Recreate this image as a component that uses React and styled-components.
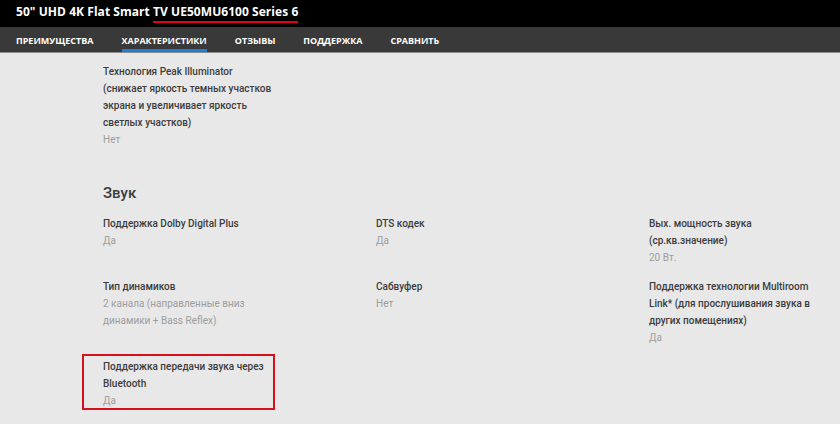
import React from "react";
import styled, { createGlobalStyle, css } from "styled-components";

const GlobalStyle = createGlobalStyle`
  html, body { margin: 0; padding: 0; background: #e8e8e8; }
  body { font-family: Roboto, "Open Sans", sans-serif; }
`;

const Page = styled.div`
  width: 840px;
  height: 424px;
  overflow: hidden;
  background: #e8e8e8;
`;

const TopBar = styled.header`
  height: 27px;
  background: #000;
  display: flex;
  align-items: center;
  padding-left: 16px;
`;

const ProductTitle = styled.h1`
  margin: 0;
  color: #fff;
  font-family: "Open Sans", sans-serif;
  font-weight: 700;
  font-size: 12px;
  letter-spacing: 0.05px;
  line-height: 14px;
  margin-top: 1px;
`;

const Marked = styled.span`
  display: inline-block;
  border-bottom: 2px solid #e3001b;
  padding-bottom: 2px;
  line-height: 14px;
`;

const NavBar = styled.nav`
  height: 25px;
  background: #393939;
  border-bottom: 1px solid #8c8c8c;
  display: flex;
  align-items: stretch;
  padding-left: 16px;
  gap: 28px;
`;

const NavItem = styled.a`
  position: relative;
  display: flex;
  align-items: center;
  color: #fff;
  font-family: "Open Sans", sans-serif;
  font-weight: 700;
  font-size: 9px;
  text-transform: uppercase;
  text-decoration: none;
  padding-top: 1px;
  ${(p) =>
    p.$active &&
    css`
      &::after {
        content: "";
        position: absolute;
        left: 0;
        right: 0;
        bottom: 0;
        height: 3px;
        background: #1f7fd6;
      }
    `}
`;

const Content = styled.main`
  padding: 10px 0 0 103px;
`;

const Spec = styled.div`
  position: relative;
  width: ${(p) => (p.$wide ? "175px" : "165px")};
  font-size: 10px;
  line-height: 17px;
  ${(p) =>
    p.$highlight &&
    css`
      &::after {
        content: "";
        position: absolute;
        left: -21px;
        top: -4px;
        width: 189px;
        height: 52px;
        border: 2px solid #d5101d;
      }
    `}
`;

const SpecName = styled.div`
  color: #3c3c3c;
  font-weight: 500;
`;

const SpecValue = styled.div`
  color: #9d9d9d;
  font-weight: 400;
`;

const SectionTitle = styled.h2`
  margin: 34px 0 0;
  font-size: 15px;
  font-weight: 500;
  line-height: 22px;
  color: #3a3a3a;
`;

const SpecGrid = styled.div`
  margin-top: 11px;
  display: grid;
  grid-template-columns: repeat(3, 273px);
  row-gap: 12px;
  align-items: start;
`;

const nav = ["Преимущества", "Характеристики", "Отзывы", "Поддержка", "Сравнить"];

const sound = [
  { name: "Поддержка Dolby Digital Plus", value: "Да" },
  { name: "DTS кодек", value: "Да" },
  { name: "Вых. мощность звука (ср.кв.значение)", value: "20 Вт." },
  { name: "Тип динамиков", value: "2 канала (направленные вниз динамики + Bass Reflex)" },
  { name: "Сабвуфер", value: "Нет" },
  {
    name: "Поддержка технологии Multiroom Link* (для прослушивания звука в других помещениях)",
    value: "Да",
  },
  { name: "Поддержка передачи звука через Bluetooth", value: "Да", highlight: true },
];

export default function App() {
  return (
    <Page>
      <GlobalStyle />
      <TopBar>
        <ProductTitle>
          50" UHD 4K Flat Smart <Marked>TV UE50MU6100 Series 6</Marked>
        </ProductTitle>
      </TopBar>
      <NavBar>
        {nav.map((n, i) => (
          <NavItem key={n} $active={i === 1}>
            {n}
          </NavItem>
        ))}
      </NavBar>
      <Content>
        <Spec $wide>
          <SpecName>
            Технология Peak Illuminator (снижает яркость темных участков экрана и увеличивает
            яркость светлых участков)
          </SpecName>
          <SpecValue>Нет</SpecValue>
        </Spec>
        <SectionTitle>Звук</SectionTitle>
        <SpecGrid>
          {sound.map((s) => (
            <Spec key={s.name} $highlight={s.highlight}>
              <SpecName>{s.name}</SpecName>
              <SpecValue>{s.value}</SpecValue>
            </Spec>
          ))}
        </SpecGrid>
      </Content>
    </Page>
  );
}
